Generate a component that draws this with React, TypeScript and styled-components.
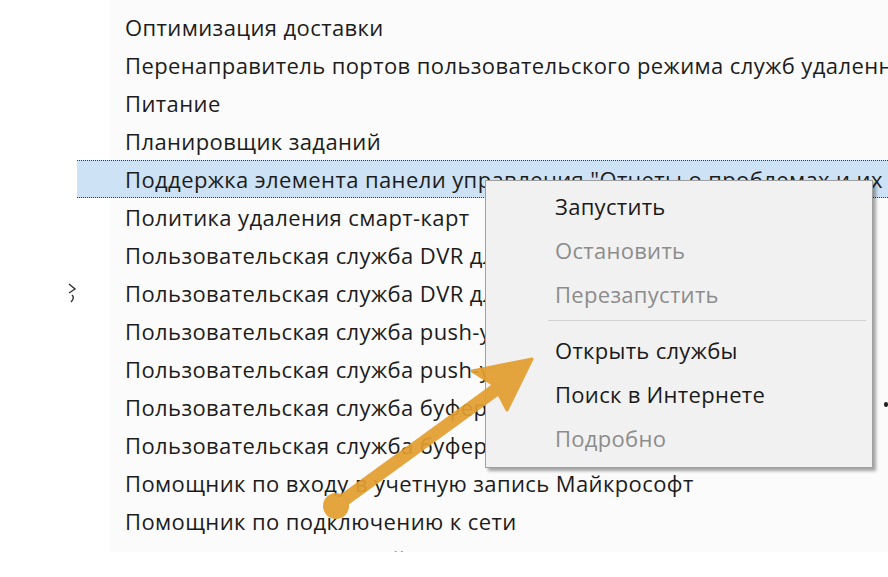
import styled, { createGlobalStyle } from "styled-components";

const GlobalStyle = createGlobalStyle`
html, body {
  margin: 0;
  padding: 0;
  background: #ffffff;
}
body {
  font-family: "Open Sans", "Noto Sans", sans-serif;
  overflow: hidden;
}
`;

const Screen = styled.div`
position: relative;
width: 888px;
height: 577px;
overflow: hidden;
background: #ffffff;
display: flex;
`;

const Gutter = styled.div`
width: 77px;
flex-shrink: 0;
display: flex;
align-items: flex-start;
justify-content: flex-end;
padding-top: 282px;
box-sizing: border-box;
`;

const ServiceList = styled.div`
flex: 1;
height: 552px;
overflow: hidden;
padding-top: 8px;
box-sizing: border-box;
background: linear-gradient(to right, #ffffff 0, #ffffff 33px, #fbfbfb 33px);
`;

const Row = styled.div<{ selected?: boolean }>`
height: 38px;
box-sizing: border-box;
display: flex;
align-items: center;
padding-left: 48px;
white-space: nowrap;
font-size: 22px;
color: #1c1c1c;
letter-spacing: 0.4px;
background: ${(p) => (p.selected ? "#cde2f4" : "transparent")};
border-top: 1px dotted ${(p) => (p.selected ? "#3a3a3a" : "transparent")};
border-bottom: 1px dotted ${(p) => (p.selected ? "#3a3a3a" : "transparent")};
`;

const Menu = styled.div`
position: absolute;
left: 485px;
top: 180px;
width: 388px;
box-sizing: border-box;
padding: 3px 0 7px;
background: #f1f1f1;
border: 1px solid #a0a0a0;
box-shadow: 3px 3px 3px rgba(0, 0, 0, 0.35);
`;

const MenuItem = styled.div<{ disabled?: boolean }>`
height: 44px;
display: flex;
align-items: center;
padding-left: 69px;
font-size: 22px;
letter-spacing: 0.3px;
color: ${(p) => (p.disabled ? "#8c8c8c" : "#1a1a1a")};
`;

const Separator = styled.div`
height: 1px;
margin: 4px 6px 7px 62px;
background: #d2d2d2;
`;

const Pointer = styled.svg`
position: absolute;
left: 0;
top: 0;
pointer-events: none;
`;

const EdgeDot = styled.div`
position: absolute;
left: 884px;
top: 402px;
width: 4px;
height: 5px;
border-radius: 2px;
background: #222;
`;

const services = [
  "Оптимизация доставки",
  "Перенаправитель портов пользовательского режима служб удаленных рабочих столов",
  "Питание",
  "Планировщик заданий",
  "Поддержка элемента панели управления \"Отчеты о проблемах и их решениях\"",
  "Политика удаления смарт-карт",
  "Пользовательская служба DVR для игр и трансляций_4a8f1",
  "Пользовательская служба DVR для игр и трансляций_6c2d9",
  "Пользовательская служба push-уведомлений Windows_4a8f1",
  "Пользовательская служба push-уведомлений Windows_6c2d9",
  "Пользовательская служба буфера обмена_4a8f1",
  "Пользовательская служба буфера обмена_6c2d9",
  "Помощник по входу в учетную запись Майкрософт",
  "Помощник по подключению к сети",
  "Посредник подключений к сети",
];

const menuTop = [
  { label: "Запустить" },
  { label: "Остановить", disabled: true },
  { label: "Перезапустить", disabled: true },
];

const menuBottom = [
  { label: "Открыть службы" },
  { label: "Поиск в Интернете" },
  { label: "Подробно", disabled: true },
];

function App() {
  return (
    <Screen>
      <GlobalStyle />
      <Gutter>
        <svg width="10" height="22" viewBox="0 0 10 22">
          <path d="M2 2 L8 7 L2 11" fill="none" stroke="#333" strokeWidth="1.4" />
          <path d="M5 13 Q8 16 4 20" fill="none" stroke="#333" strokeWidth="1.4" />
        </svg>
      </Gutter>
      <ServiceList>
        {services.map((name, i) => (
          <Row key={name} selected={i === 4}>
            {name}
          </Row>
        ))}
      </ServiceList>
      <Menu>
        {menuTop.map((item) => (
          <MenuItem key={item.label} disabled={item.disabled}>
            {item.label}
          </MenuItem>
        ))}
        <Separator />
        {menuBottom.map((item) => (
          <MenuItem key={item.label} disabled={item.disabled}>
            {item.label}
          </MenuItem>
        ))}
      </Menu>
      <EdgeDot />
      <Pointer width="888" height="577" viewBox="0 0 888 577">
        <g fill="#e39e30" stroke="#e39e30" opacity="0.93">
          <line x1="337" y1="505" x2="498" y2="388" strokeWidth="13" strokeLinecap="round" />
          <circle cx="336" cy="506" r="13" stroke="none" />
          <polygon points="532,359 472,371 494,385 507,410" strokeWidth="3" strokeLinejoin="round" />
        </g>
      </Pointer>
    </Screen>
  );
}

export default App;
